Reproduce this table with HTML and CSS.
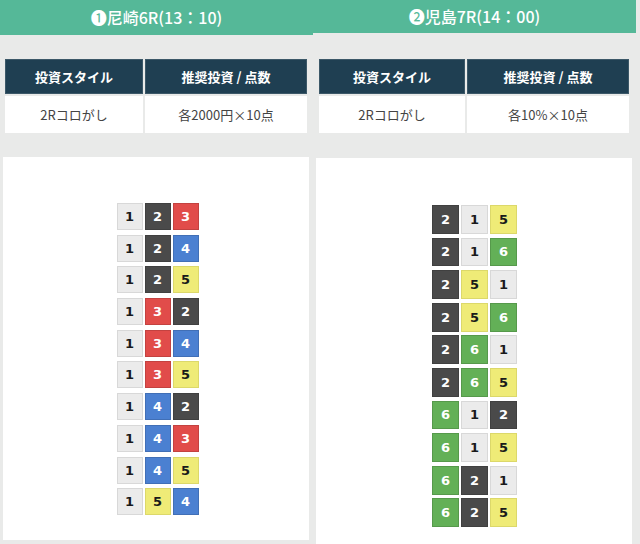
FILE: index.html
```html
<!DOCTYPE html>
<html lang="ja">
<head>
<meta charset="utf-8">
<title>2Rコロがし</title>
<link rel="stylesheet" href="styles.css">
</head>
<body>
<div class="wrap">
  <section class="panel panel-a">
    <h2 class="title title-a">❶尼崎6R(13：10)</h2>
    <div class="info info-a">
      <div class="th">投資スタイル</div>
      <div class="th">推奨投資 / 点数</div>
      <div class="td">2Rコロがし</div>
      <div class="td">各2000円×10点</div>
    </div>
    <div class="card card-a">
      <div class="grid grid-a">
        <span class="t c1">1</span><span class="t c2">2</span><span class="t c3">3</span>
        <span class="t c1">1</span><span class="t c2">2</span><span class="t c4">4</span>
        <span class="t c1">1</span><span class="t c2">2</span><span class="t c5">5</span>
        <span class="t c1">1</span><span class="t c3">3</span><span class="t c2">2</span>
        <span class="t c1">1</span><span class="t c3">3</span><span class="t c4">4</span>
        <span class="t c1">1</span><span class="t c3">3</span><span class="t c5">5</span>
        <span class="t c1">1</span><span class="t c4">4</span><span class="t c2">2</span>
        <span class="t c1">1</span><span class="t c4">4</span><span class="t c3">3</span>
        <span class="t c1">1</span><span class="t c4">4</span><span class="t c5">5</span>
        <span class="t c1">1</span><span class="t c5">5</span><span class="t c4">4</span>
      </div>
    </div>
  </section>
  <section class="panel panel-b">
    <h2 class="title title-b">❷児島7R(14：00)</h2>
    <div class="info info-b">
      <div class="th">投資スタイル</div>
      <div class="th">推奨投資 / 点数</div>
      <div class="td">2Rコロがし</div>
      <div class="td">各10%×10点</div>
    </div>
    <div class="card card-b">
      <div class="grid grid-b">
        <span class="t c2">2</span><span class="t c1">1</span><span class="t c5">5</span>
        <span class="t c2">2</span><span class="t c1">1</span><span class="t c6">6</span>
        <span class="t c2">2</span><span class="t c5">5</span><span class="t c1">1</span>
        <span class="t c2">2</span><span class="t c5">5</span><span class="t c6">6</span>
        <span class="t c2">2</span><span class="t c6">6</span><span class="t c1">1</span>
        <span class="t c2">2</span><span class="t c6">6</span><span class="t c5">5</span>
        <span class="t c6">6</span><span class="t c1">1</span><span class="t c2">2</span>
        <span class="t c6">6</span><span class="t c1">1</span><span class="t c5">5</span>
        <span class="t c6">6</span><span class="t c2">2</span><span class="t c1">1</span>
        <span class="t c6">6</span><span class="t c2">2</span><span class="t c5">5</span>
      </div>
    </div>
  </section>
</div>
</body>
</html>
```

FILE: styles.css
```css
html, body {
  margin: 0;
  padding: 0;
  background: #e9eae9;
  width: 640px;
  height: 544px;
  overflow: hidden;
  font-family: "Noto Sans CJK JP", "Noto Sans", sans-serif;
}

.wrap {
  display: flex;
  align-items: flex-start;
}

.panel {
  display: flex;
  flex-direction: column;
}

.panel-a { width: 313px; }
.panel-b { width: 323px; }

.title {
  margin: 0;
  background: #55b898;
  color: #fff;
  font-weight: 500;
  font-size: 16px;
  text-align: center;
}

.title-a { height: 35px; line-height: 34px; }
.title-b { height: 33px; line-height: 33px; }

.info {
  display: grid;
  row-gap: 2px;
  column-gap: 2px;
  margin-top: 24px;
}

.info-a {
  grid-template-columns: 138px 162px;
  margin-left: 5px;
}

.info-b {
  grid-template-columns: 146px 162px;
  margin-left: 6px;
  margin-top: 26px;
}

.th {
  background: #1f3f52;
  color: #fff;
  font-weight: 700;
  font-size: 13px;
  height: 35px;
  line-height: 35px;
  text-align: center;
  box-shadow: inset 0 0 0 1px #3c5868;
}

.td {
  background: #fff;
  color: #444;
  font-size: 13px;
  height: 37px;
  line-height: 37px;
  text-align: center;
}

.card {
  background: #fff;
  display: flex;
  justify-content: center;
  align-items: flex-start;
}

.card-a {
  margin-top: 24px;
  margin-left: 3px;
  width: 306px;
  height: 383px;
  padding-top: 46px;
  box-sizing: border-box;
}

.card-b {
  margin-top: 25px;
  margin-left: 3px;
  width: 316px;
  height: 386px;
  padding-top: 47px;
  box-sizing: border-box;
}

.grid {
  display: grid;
  grid-template-columns: repeat(3, auto);
}

.grid-a {
  column-gap: 2px;
  row-gap: 4.7px;
  margin-left: 3px;
}

.grid-b {
  column-gap: 2px;
  row-gap: 3.8px;
  margin-left: 1px;
}

.t {
  display: flex;
  align-items: center;
  justify-content: center;
  box-sizing: border-box;
  border: 1px solid rgba(0, 0, 0, 0.13);
  font-family: "DejaVu Sans", sans-serif;
  font-weight: 700;
  font-size: 13px;
  color: #fff;
}

.grid-a .t { width: 26px; height: 27px; }
.grid-b .t { width: 27px; height: 28.8px; }

.c1 { background: #ebebeb; color: #1a1a1a; border-color: #d8d8d8; }
.c2 { background: #4a4a4a; }
.c3 { background: #e14c4a; }
.c4 { background: #4b80d1; }
.c5 { background: #efeb77; color: #1a1a1a; border-color: #dcd86a; }
.c6 { background: #63b057; }
```
